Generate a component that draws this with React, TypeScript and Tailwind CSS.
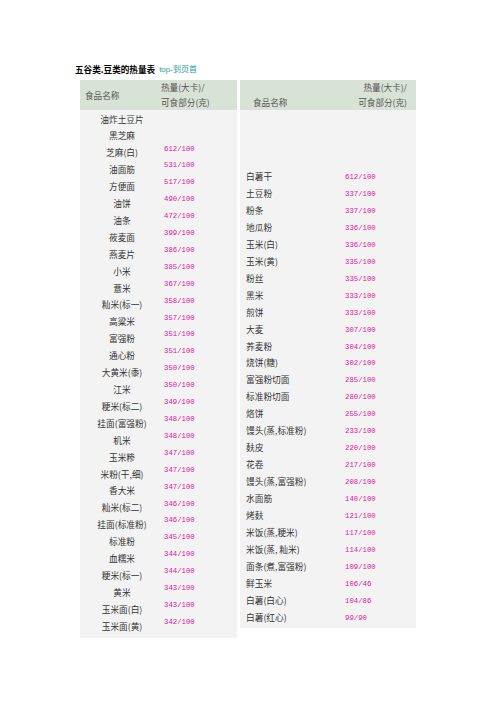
import React from "react";

const leftNames = [
  "油炸土豆片", "黑芝麻", "芝麻(白)", "油面筋", "方便面", "油饼", "油条", "莜麦面", "燕麦片", "小米",
  "薏米", "籼米(标一)", "高粱米", "富强粉", "通心粉", "大黄米(黍)", "江米", "粳米(标二)", "挂面(富强粉)", "机米",
  "玉米糁", "米粉(干,细)", "香大米", "籼米(标二)", "挂面(标准粉)", "标准粉", "血糯米", "粳米(标一)", "黄米", "玉米面(白)",
  "玉米面(黄)",
];

const leftValues = [
  "612/100", "531/100", "517/100", "490/100", "472/100", "399/100", "386/100", "385/100", "367/100", "358/100",
  "357/100", "351/100", "351/100", "350/100", "350/100", "349/100", "348/100", "348/100", "347/100", "347/100",
  "347/100", "346/100", "346/100", "345/100", "344/100", "344/100", "343/100", "343/100", "342/100",
];

const rightRows: [string, string][] = [
  ["白薯干", "612/100"], ["土豆粉", "337/100"], ["粉条", "337/100"], ["地瓜粉", "336/100"], ["玉米(白)", "336/100"],
  ["玉米(黄)", "335/100"], ["粉丝", "335/100"], ["黑米", "333/100"], ["煎饼", "333/100"], ["大麦", "307/100"],
  ["荞麦粉", "304/100"], ["烧饼(糖)", "302/100"], ["富强粉切面", "285/100"], ["标准粉切面", "280/100"], ["烙饼", "255/100"],
  ["馒头(蒸,标准粉)", "233/100"], ["麸皮", "220/100"], ["花卷", "217/100"], ["馒头(蒸,富强粉)", "208/100"], ["水面筋", "140/100"],
  ["烤麸", "121/100"], ["米饭(蒸,粳米)", "117/100"], ["米饭(蒸, 籼米)", "114/100"], ["面条(煮,富强粉)", "109/100"], ["鲜玉米", "106/46"],
  ["白薯(白心)", "104/86"], ["白薯(红心)", "99/90"],
];

const cjk = "font-['Noto_Sans_CJK_SC',sans-serif]";
const mono = "font-['Liberation_Mono','DejaVu_Sans_Mono',monospace]";

export default function App() {
  return (
    <div className={`w-[496px] h-[702px] bg-white pl-[75px] pt-[62px] ${cjk}`}>
      <div className="flex items-center h-[14px] leading-[14px] mb-[4px]">
        <span className="text-[8.6px] font-bold text-black">五谷类.豆类的热量表</span>
        <span className="ml-[4px] text-[8px] text-[#1f9a9a]">
          <span className="font-['Liberation_Sans',sans-serif]">top-</span>到页首
        </span>
      </div>
      <div className="ml-[5px] flex gap-[3px] items-start">
        {/* Left column */}
        <div className="w-[157px]">
          <div className="h-[30px] bg-[#d9e2d6] flex items-center text-[8.6px] text-[#555] leading-[15px]">
            <div className="w-[81px] pl-[5px]">食品名称</div>
            <div>
              <div>热量(大卡)/</div>
              <div>可食部分(克)</div>
            </div>
          </div>
          <div className="h-[528px] bg-[#f3f3f3] flex">
            <div className="w-[84px] pt-[1.5px] text-center text-[8.7px] text-[#333] leading-[16.9px]">
              {leftNames.map((n, i) => (
                <div key={i}>{n}</div>
              ))}
            </div>
            <div className={`pt-[30.5px] text-[7.3px] text-[#e0159b] leading-[16.9px] ${mono}`}>
              {leftValues.map((v, i) => (
                <div key={i}>{v}</div>
              ))}
            </div>
          </div>
        </div>
        {/* Right column */}
        <div className="w-[176px]">
          <div className="h-[30px] bg-[#d9e2d6] flex items-center justify-between pl-[13px] pr-[9px] text-[8.6px] text-[#555] leading-[15px]">
            <div className="self-end mb-[0.5px]">食品名称</div>
            <div className="text-right">
              <div>热量(大卡)/</div>
              <div>可食部分(克)</div>
            </div>
          </div>
          <div className="h-[518px] bg-[#f3f3f3] pt-[59px]">
            {rightRows.map(([n, v], i) => (
              <div key={i} className="flex leading-[16.95px]">
                <div className="w-[105px] pl-[6px] text-[8.7px] text-[#333] whitespace-nowrap">{n}</div>
                <div className={`text-[7.3px] text-[#e0159b] ${mono}`}>{v}</div>
              </div>
            ))}
          </div>
        </div>
      </div>
    </div>
  );
}
